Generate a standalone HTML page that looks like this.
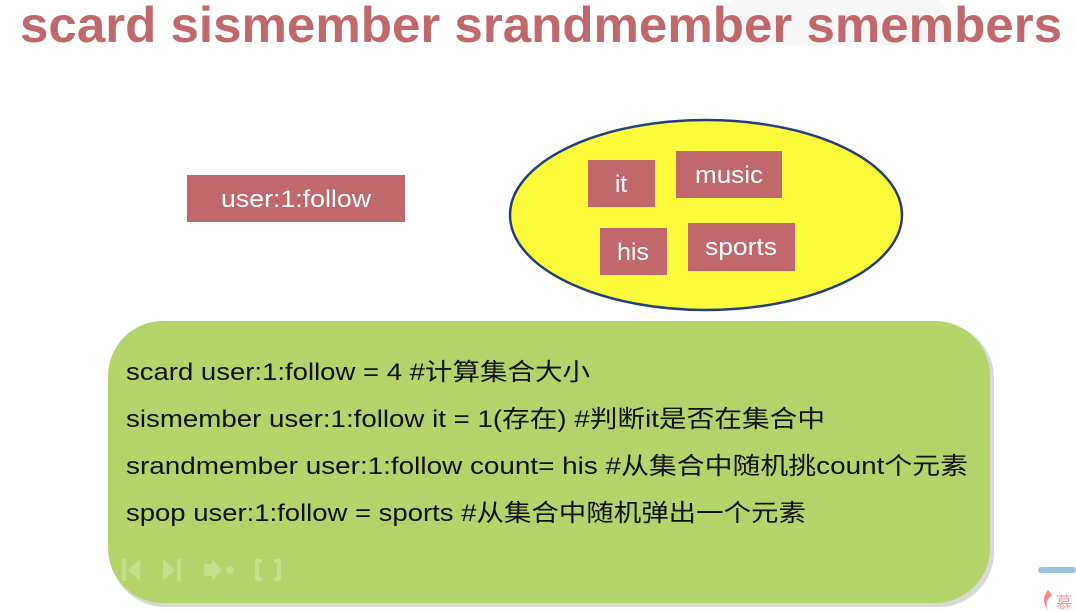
<!DOCTYPE html>
<html><head><meta charset="utf-8"><style>
html,body{margin:0;padding:0;background:#fff;width:1076px;height:612px;overflow:hidden}
</style></head><body>
<svg width="1076" height="612" viewBox="0 0 1076 612" xmlns="http://www.w3.org/2000/svg" style="display:block">
<rect x="0" y="0" width="1076" height="612" fill="#fff"/>
<rect x="725" y="0" width="220" height="45" rx="10" fill="#f7f7f7"/>
<text x="20" y="42" font-family="Liberation Sans, sans-serif" font-weight="bold" font-size="50" fill="#c0686c" textLength="1042" lengthAdjust="spacingAndGlyphs">scard sismember srandmember smembers</text>
<rect x="187" y="175" width="218" height="47" fill="#c0686c"/>
<text x="296" y="207" text-anchor="middle" font-family="Liberation Sans, sans-serif" font-size="24" fill="#fff" textLength="150" lengthAdjust="spacingAndGlyphs">user:1:follow</text>
<ellipse cx="706" cy="215" rx="196" ry="95" fill="#fcfc3c" stroke="#24407a" stroke-width="2.5"/>
<rect x="588" y="160" width="67" height="47" fill="#c0686c"/>
<text x="621" y="192" text-anchor="middle" font-family="Liberation Sans, sans-serif" font-size="24" fill="#fff">it</text>
<rect x="676" y="151" width="106" height="47" fill="#c0686c"/>
<text x="729" y="183" text-anchor="middle" font-family="Liberation Sans, sans-serif" font-size="24" fill="#fff" textLength="68" lengthAdjust="spacingAndGlyphs">music</text>
<rect x="600" y="228" width="67" height="47" fill="#c0686c"/>
<text x="633" y="260" text-anchor="middle" font-family="Liberation Sans, sans-serif" font-size="24" fill="#fff" textLength="32" lengthAdjust="spacingAndGlyphs">his</text>
<rect x="688" y="223" width="107" height="48" fill="#c0686c"/>
<text x="741" y="255" text-anchor="middle" font-family="Liberation Sans, sans-serif" font-size="24" fill="#fff" textLength="72" lengthAdjust="spacingAndGlyphs">sports</text>
<rect x="110" y="323" width="884" height="284" rx="55" fill="#d9d9d9"/>
<rect x="108" y="321" width="882" height="282" rx="55" fill="#b4d36a"/>
<g font-family="Liberation Sans, Noto Sans CJK SC, sans-serif" font-size="24" fill="#111">
<text x="126" y="380" textLength="464" lengthAdjust="spacingAndGlyphs">scard user:1:follow = 4 #计算集合大小</text>
<text x="126" y="427" textLength="699" lengthAdjust="spacingAndGlyphs">sismember user:1:follow it = 1(存在) #判断it是否在集合中</text>
<text x="126" y="474" textLength="842" lengthAdjust="spacingAndGlyphs">srandmember user:1:follow count= his #从集合中随机挑count个元素</text>
<text x="126" y="521" textLength="680" lengthAdjust="spacingAndGlyphs">spop user:1:follow = sports #从集合中随机弹出一个元素</text>
</g>
<g fill="#c9e08f" opacity="0.9">
<rect x="122" y="559" width="4" height="22"/><path d="M140 559 L128 570 L140 581Z"/>
<path d="M163 559 L175 570 L163 581Z"/><rect x="177" y="559" width="4" height="22"/>
<path d="M204 564 h8 v-5 l10 11 -10 11 v-5 h-8z"/><circle cx="230" cy="570" r="4"/>
<path d="M255 559 h7 v4 h-3 v14 h3 v4 h-7z M281 559 h-7 v4 h3 v14 h-3 v4 h7z"/>
</g>
<rect x="1038" y="567" width="38" height="6" rx="3" fill="#9ec1e8"/>
<path d="M1048 590 q-8 10 0 20 q-4 -10 4 -14 q-2 -4 -4 -6z" fill="#e88"/>
<text x="1056" y="608" font-family="Noto Sans CJK SC, sans-serif" font-size="16" fill="#e99">慕</text>
</svg>
</body></html>
